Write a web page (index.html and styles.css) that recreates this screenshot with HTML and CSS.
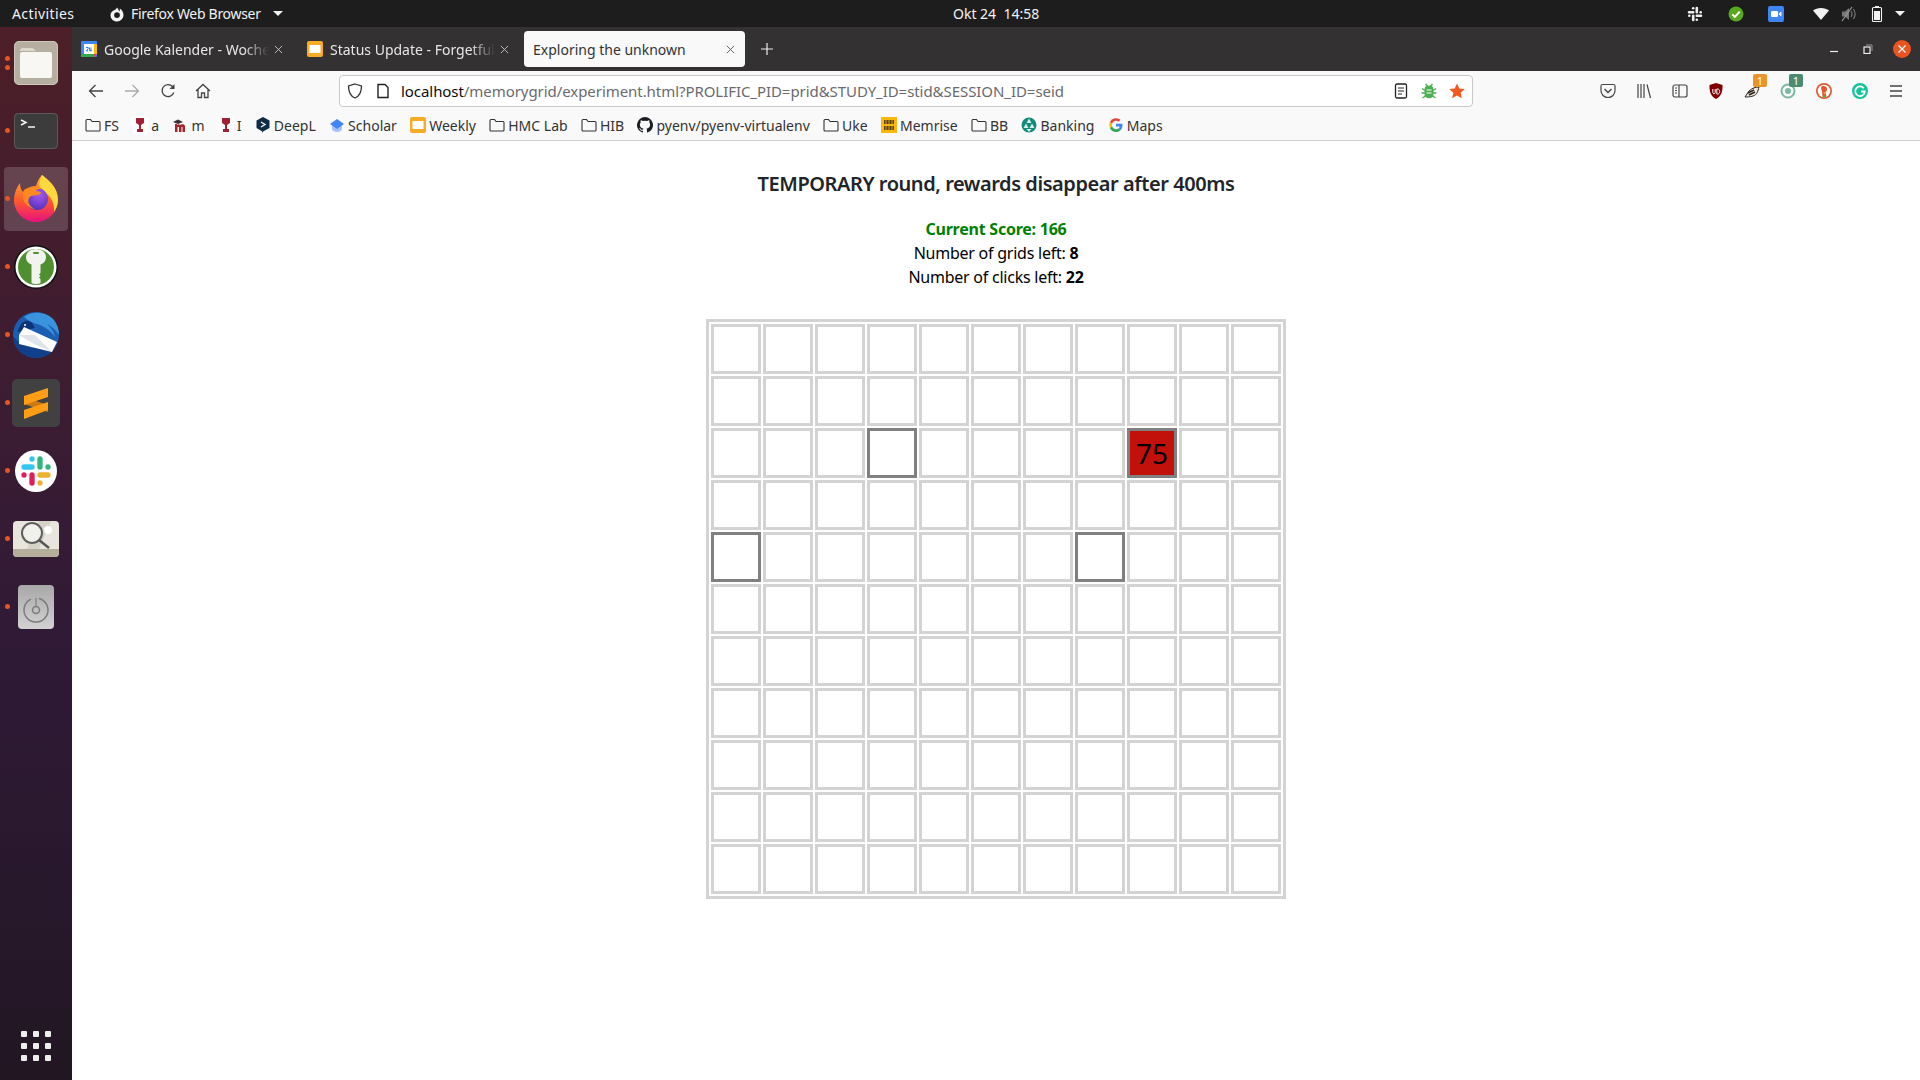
FILE: index.html
```html
<!DOCTYPE html>
<html lang="en">
<head>
    <meta charset="UTF-8">
    <meta name="viewport" content="width=device-width, initial-scale=1.0">
    <title>Exploring the unknown</title>
    <link rel="stylesheet" href="styles.css">
</head>
<body>
    <div class="topBar">
        <span class="activities">Activities</span>
        <div class="appMenu">
            <svg class="appIcon" viewBox="0 0 16 16"><path fill="#f2f2f2" d="M8 1.500c-.4 1.200-1.500 1.700-2.200 2.400C3.200 4.500 1.500 6.600 1.500 9.200 1.500 12.800 4.400 15.500 8 15.500s6.500-2.800 6.500-6.400c0-3-1.800-5.300-3.800-6.500.5 1.400.1 2.300-.5 2.800C9.600 3.800 9 2.500 8 1.500zM8 6.200a2.900 2.900 0 1 1 0 5.800 2.900 2.900 0 0 1 0-5.800z"/></svg>
            <span class="appName">Firefox Web Browser</span>
            <i class="caret"></i>
        </div>
        <span class="clock">Okt 24&nbsp; 14:58</span>
        <div class="tray">
            <svg class="slackTray" viewBox="0 0 16 16"><g fill="none" stroke="#eee" stroke-width="2.600" stroke-linecap="round"><path d="M2 6.300h4.200M9.800 2v4.200M14 9.800H9.800M6.200 14V9.800"/></g><g fill="#eee"><circle cx="6.200" cy="2.300" r="1.300"/><circle cx="13.700" cy="6.200" r="1.300"/><circle cx="9.800" cy="13.700" r="1.300"/><circle cx="2.300" cy="9.800" r="1.300"/></g></svg>
            <svg class="checkTray" viewBox="0 0 16 16"><circle cx="8" cy="8" r="7.500" fill="#5aa820"/><path d="M4.300 8.300l2.600 2.600 4.800-5.200" fill="none" stroke="#fff" stroke-width="1.900"/></svg>
            <svg class="zoomTray" viewBox="0 0 16 16"><rect width="16" height="18" y="-1" rx="4" fill="#3f86f4"/><rect x="3" y="5" width="7" height="6" rx="1.300" fill="#fff"/><path d="M10.800 7.500l2.600-2v5l-2.600-2z" fill="#fff"/></svg>
            <svg class="wifiTray" viewBox="0 0 16 16"><path fill="#f2f2f2" d="M8 14L0 4.500C2 3 4.800 2 8 2s6 1 8 2.500z"/></svg>
            <svg class="soundTray" viewBox="0 0 16 16"><path fill="#777" d="M1 5.500h3L8 2v12l-4-3.500H1z"/><path d="M10 5c1.200 1.800 1.200 4.200 0 6M12.300 3c2.200 3 2.200 7 0 10" fill="none" stroke="#777" stroke-width="1.200"/><path d="M1 15L11 1" stroke="#999" stroke-width="1.200"/></svg>
            <svg class="batteryTray" viewBox="0 0 16 16"><path d="M6 0h4v1.500H6z" fill="#f2f2f2"/><rect x="3.500" y="1.500" width="9" height="14" rx="1" fill="none" stroke="#f2f2f2" stroke-width="1.100"/><rect x="5" y="5" width="6" height="9" fill="#f2f2f2"/></svg>
            <i class="caret trayCaret"></i>
        </div>
    </div>

    <div class="desktop">
        <div class="dock">
            <div class="dockItem"><i class="dot dotUp"></i><i class="dot dotDown"></i>
                <svg class="dockIcon" viewBox="0 0 44 44"><rect width="44" height="44" rx="5" fill="#b6af9f"/><rect x=".5" y=".5" width="43" height="43" rx="5" fill="none" stroke="#cdc8bb"/><path d="M6 10c0-2 1-3 3-3h9c1.500 0 2.500 2 4 3z" fill="#dcd8cc"/><rect x="6" y="11" width="32" height="26" rx="2" fill="#f8f7f4"/></svg>
            </div>
            <div class="dockItem"><i class="dot"></i>
                <svg class="dockIcon termIcon" viewBox="0 0 44 36"><rect width="44" height="36" rx="4" fill="#3c3c3c"/><rect x=".5" y=".5" width="43" height="35" rx="4" fill="none" stroke="#5a5a5a"/><path d="M7 7l5 2.500L7 12M14 14h7" fill="none" stroke="#f4f4f4" stroke-width="1.500"/></svg>
            </div>
            <div class="dockItem active"><i class="dot"></i>
                <svg class="dockIcon foxIcon" viewBox="0 0 44 47">
                    <defs>
                        <linearGradient id="foxBody" x1="0" y1="0" x2="0" y2="1"><stop offset="0" stop-color="#ffb02e"/><stop offset=".55" stop-color="#ff5a2c"/><stop offset="1" stop-color="#e8107f"/></linearGradient>
                        <radialGradient id="foxGlobe" cx=".6" cy=".3" r=".8"><stop offset="0" stop-color="#a55cf0"/><stop offset="1" stop-color="#4a2bb5"/></radialGradient>
                    </defs>
                    <path d="M28 0c8 6 16 13 16 25 0 12-10 22-22 22S0 37 0 25C0 19 2 13 6 8c0 4 1 7 3 9 3-3 8-6 13-6 1-4 3-8 6-11z" fill="url(#foxBody)"/>
                    <path d="M28 0c6 5 16 12 16 25 0 5-2 9-4 12 1-11-5-18-12-21-3-2-4-8 0-16z" fill="#ffd83d"/>
                    <circle cx="23" cy="24" r="11" fill="url(#foxGlobe)"/>
                    <path d="M10 15c5-4 14-5 19-1-4-1-7 1-7 2 3 0 5 1 5 2-4 4-10 1-12 5-2 4 1 9 6 11-6-1-12-6-12-12 0-3 0-5 1-7z" fill="#ff8a1f"/>
                </svg>
            </div>
            <div class="dockItem"><i class="dot"></i>
                <svg class="dockIcon" viewBox="0 0 44 44"><circle cx="22" cy="22" r="22" fill="#111"/><circle cx="22" cy="22" r="20.500" fill="#fff"/><circle cx="22" cy="22" r="18" fill="#4e8f2f"/><path d="M22 4c6 0 10 3.500 10 8 0 4-2.500 6.500-5.500 7.500V28l-1.500 1.500 1.500 1.500-1.500 1.500 1.500 1.500V38c-2 1.500-7 1.500-9 0V19.500C14.500 18.500 12 16 12 12c0-4.500 4-8 10-8z" fill="#f2f2ee"/><rect x="19" y="7" width="6" height="2" rx="1" fill="#4e8f2f"/></svg>
            </div>
            <div class="dockItem"><i class="dot"></i>
                <svg class="dockIcon bigIcon" viewBox="0 0 48 48"><circle cx="24" cy="24" r="23" fill="#1a5fb4"/><path d="M12 6c8-6 22-6 30 3 3 4 5 9 5 15-4-6-8-9-12-11 3 3 7 7 8 13-5-7-11-11-18-13-4-1-8-3-13-7z" fill="#3b93dd"/><path d="M1 25C1 37 11 47 24 47c9 0 17-5 21-14-13 7-32 7-44-8z" fill="#123f8a"/><path d="M8 15c2-5 8-7 12-3l3 5-13 3-5 1z" fill="#0e3474"/><circle cx="13" cy="14" r="1" fill="#fff"/><path d="M7 24l5-8 33 15-5 10-33-8z" fill="#fff"/><path d="M7 24l16 0 17 17-18-8z" fill="#dfe3ea"/></svg>
            </div>
            <div class="dockItem"><i class="dot"></i>
                <svg class="dockIcon bigIcon" viewBox="0 0 48 48"><rect width="48" height="48" rx="5" fill="#414141"/><path d="M12 18l24 8v7L12 25z" fill="#c97a10"/><path d="M12 17L36 9v9L12 26z" fill="#ff9d14"/><path d="M36 23v8l-24 9v-9z" fill="#ff9d14"/></svg>
            </div>
            <div class="dockItem"><i class="dot"></i>
                <svg class="dockIcon slackIcon" viewBox="0 0 42 42"><circle cx="21" cy="21" r="21" fill="#fff"/><g fill="none" stroke-width="5.300" stroke-linecap="round"><path d="M9 17h8" stroke="#36c5f0"/><path d="M25 9v8" stroke="#2eb67d"/><path d="M33 25h-8" stroke="#ecb22e"/><path d="M17 33v-8" stroke="#e01e5a"/></g><circle cx="17" cy="9" r="2.650" fill="#36c5f0"/><circle cx="33" cy="17" r="2.650" fill="#2eb67d"/><circle cx="25" cy="33" r="2.650" fill="#ecb22e"/><circle cx="9" cy="25" r="2.650" fill="#e01e5a"/></svg>
            </div>
            <div class="dockItem"><i class="dot"></i>
                <svg class="dockIcon searchIcon" viewBox="0 0 46 36"><rect width="46" height="36" rx="4" fill="#e7e5dc"/><path d="M0 28h46v4c0 2-2 4-4 4H4c-2 0-4-2-4-4z" fill="#b5ae9b"/><path d="M26 0h12L26 28H14z" fill="#d5d3c7"/><circle cx="35" cy="9" r="4" fill="#fff"/><circle cx="19" cy="12" r="10" fill="#f0f0ec" stroke="#5f5f5f" stroke-width="2"/><path d="M26 19l10 8" stroke="#555" stroke-width="2.500"/></svg>
            </div>
            <div class="dockItem"><i class="dot"></i>
                <svg class="dockIcon diskIcon" viewBox="0 0 36 44">
                    <defs><linearGradient id="diskFill" x1="0" y1="0" x2="0" y2="1"><stop offset="0" stop-color="#a8a8a8"/><stop offset="1" stop-color="#d2d2d2"/></linearGradient></defs>
                    <rect width="36" height="44" rx="4" fill="url(#diskFill)"/><path d="M21 13.400a12 12 0 1 1-8 .7" fill="none" stroke="#7c7c7c" stroke-width="1.500"/><circle cx="18" cy="25" r="3.500" fill="none" stroke="#7c7c7c" stroke-width="1.500"/><path d="M18 13v8" stroke="#7c7c7c" stroke-width="1.200"/>
                </svg>
            </div>
            <div class="appGrid">
                <i></i><i></i><i></i><i></i><i></i><i></i><i></i><i></i><i></i>
            </div>
        </div>

        <div class="browser">
            <div class="tabBar">
                <div class="tab">
                    <svg class="favicon" viewBox="0 0 16 16"><rect width="16" height="16" rx="1" fill="#4285f4"/><rect x="3" y="3" width="10" height="10" fill="#fff"/><path d="M0 13h13v3H1a1 1 0 0 1-1-1z" fill="#34a853"/><path d="M13 13h3l-3 3z" fill="#ea4335"/><path d="M13 3h3v10h-3z" fill="#fbbc04"/><path d="M5 6.500h2.200v1L5.500 10H7M8.500 6.500V9.500h2M10 6.500V10.500" fill="none" stroke="#1a73e8" stroke-width=".9"/></svg>
                    <span class="tabTitle">Google Kalender - Woche</span>
                    <svg class="tabClose" viewBox="0 0 10 10"><path d="M1 1l8 8M9 1l-8 8" stroke="#c9c9c9" stroke-width="1"/></svg>
                </div>
                <div class="tab">
                    <svg class="favicon" viewBox="0 0 16 16"><rect width="16" height="16" rx="2" fill="#f9ab26"/><rect x="2.500" y="4" width="11" height="8" fill="#fff"/></svg>
                    <span class="tabTitle">Status Update - Forgetful</span>
                    <svg class="tabClose" viewBox="0 0 10 10"><path d="M1 1l8 8M9 1l-8 8" stroke="#c9c9c9" stroke-width="1"/></svg>
                </div>
                <div class="tab current">
                    <span class="tabTitle">Exploring the unknown</span>
                    <svg class="tabClose" viewBox="0 0 10 10"><path d="M1 1l8 8M9 1l-8 8" stroke="#555" stroke-width="1"/></svg>
                </div>
                <svg class="newTab" viewBox="0 0 12 12"><path d="M6 0v12M0 6h12" stroke="#eee" stroke-width="1.200"/></svg>
                <div class="winButtons">
                    <div class="winBtn"><svg viewBox="0 0 10 10"><path d="M1 7.500h8" stroke="#eee" stroke-width="1.200"/></svg></div>
                    <div class="winBtn"><svg viewBox="0 0 10 10"><rect x="1" y="3" width="6" height="6.500" fill="none" stroke="#eee" stroke-width="1.200"/><path d="M3 1h6v6" fill="none" stroke="#999"/></svg></div>
                    <div class="winBtn"><span class="closeCircle"><svg viewBox="0 0 10 10"><path d="M1.500 1.500l7 7M8.500 1.500l-7 7" stroke="#fff" stroke-width="1.200"/></svg></span></div>
                </div>
            </div>

            <div class="toolBar">
                <div class="toolBtn"><svg viewBox="0 0 16 16"><path d="M15 8H1.500M7.500 2L1.500 8l6 6" fill="none" stroke="#444" stroke-width="1.300"/></svg></div>
                <div class="toolBtn"><svg viewBox="0 0 16 16"><path d="M1 8h13.500M8.500 2l6 6-6 6" fill="none" stroke="#aaa" stroke-width="1.300"/></svg></div>
                <div class="toolBtn"><svg viewBox="0 0 16 16"><path d="M13.800 9.500A6 6 0 1 1 12.500 3.500l1.500 1.500" fill="none" stroke="#444" stroke-width="1.300"/><path d="M14.500 1v5h-5z" fill="#444"/></svg></div>
                <div class="toolBtn homeBtn"><svg viewBox="0 0 16 16"><path d="M1 8l7-6.500L15 8M3 6.500V14.500h3.500V10h3v4.500H13V6.500" fill="none" stroke="#444" stroke-width="1.300"/></svg></div>

                <div class="urlBar">
                    <svg class="urlIcon" viewBox="0 0 16 16"><path d="M8 1l6.500 2c0 6-1.500 10-6.500 12C3 13 1.500 9 1.500 3z" fill="none" stroke="#333" stroke-width="1.300"/></svg>
                    <svg class="urlIcon pageIcon" viewBox="0 0 16 16"><path d="M3 1.500h7l3 3v10H3z" fill="none" stroke="#222" stroke-width="1.400"/></svg>
                    <span class="urlText"><b>localhost</b>/memorygrid/experiment.html?PROLIFIC_PID=prid&amp;STUDY_ID=stid&amp;SESSION_ID=seid</span>
                    <svg class="urlIcon" viewBox="0 0 16 16"><rect x="2.500" y="1" width="11" height="14" rx="1.500" fill="none" stroke="#222" stroke-width="1.300"/><path d="M5 5h6M5 8h6M5 11h4" stroke="#222" stroke-width="1.200"/></svg>
                    <svg class="urlIcon" viewBox="0 0 16 16"><path d="M8 2.500c3 0 4.500 1.500 4.500 4v5.500c0 1.800-2.200 3.200-4.500 3.200S3.500 13.800 3.500 12V6.500c0-2.500 1.500-4 4.500-4z" fill="#4caf50"/><path d="M4.500 1l2 2M11.500 1l-2 2M1 5.500l3 2M15 5.500l-3 2M.5 10H4M15.500 10H12M1.500 15l3-2M14.500 15l-3-2" stroke="#4caf50" stroke-width="1.500"/><path d="M5.500 7h5M5.500 10h5" stroke="#fff" stroke-width="1"/></svg>
                    <svg class="urlIcon" viewBox="0 0 16 16"><path fill="#f2581f" d="M8 .5l2.300 5 5.400.6-4 3.700 1.100 5.400L8 12.500l-4.800 2.700 1.100-5.400-4-3.700 5.400-.6z"/></svg>
                </div>

                <div class="toolIcons">
                    <div class="toolBtn"><svg viewBox="0 0 16 16"><path d="M1 3c0-1 .7-1.500 1.500-1.500h11C14.300 1.500 15 2 15 3v4.500C15 11.500 12 14.500 8 14.500S1 11.500 1 7.500z" fill="none" stroke="#444" stroke-width="1.200"/><path d="M4.500 6L8 9.500 11.500 6" fill="none" stroke="#444" stroke-width="1.400"/></svg></div>
                    <div class="toolBtn"><svg viewBox="0 0 16 16"><path d="M2 1v14M5 1v14M8 1v14M11 1.500l3.500 13.500" fill="none" stroke="#444" stroke-width="1.200"/></svg></div>
                    <div class="toolBtn"><svg viewBox="0 0 16 16"><rect x="1" y="2" width="14" height="12" rx="2" fill="none" stroke="#444" stroke-width="1.200"/><path d="M7 2v12M3 5h2M3 7.500h2M3 10h2" stroke="#444" stroke-width="1.200"/></svg></div>
                    <div class="toolBtn"><svg viewBox="0 0 16 16"><path d="M8 0l6.500 2c.3 7-1.500 11.500-6.500 14C3 13.500 1.200 9 1.500 2z" fill="#800000"/><path d="M4.800 6v3.500c0 1.500 2.400 1.500 2.400 0V6M8.800 6v5h1c2.500 0 2.500-5 0-5z" fill="none" stroke="#fff" stroke-width="1"/></svg></div>
                    <div class="toolBtn badged">
                        <svg viewBox="0 0 16 16"><path d="M1 14l4-6c3-3 7-4 10-4-1 4-2 8-6 9-3 1-6 1-8 1z" fill="#f4ead8" stroke="#222" stroke-width="1"/><path d="M4 10l6-3M5 12l6-3" stroke="#222" stroke-width="1.500"/></svg>
                        <span class="badge orange">1</span>
                    </div>
                    <div class="toolBtn badged">
                        <svg viewBox="0 0 16 16"><circle cx="8" cy="8" r="6.500" fill="none" stroke="#79b9a3" stroke-width="2"/><circle cx="8" cy="8" r="3" fill="#79b9a3"/></svg>
                        <span class="badge teal">1</span>
                    </div>
                    <div class="toolBtn"><svg viewBox="0 0 16 16"><circle cx="8" cy="8" r="8" fill="#de5833"/><circle cx="8" cy="8" r="6.300" fill="#fff"/><path d="M5.500 3.500c2-1 5-.5 5.500 2 .3 2-1 3-1.500 4l1 4c-1 .8-3 .8-4 0L6 8C5 6.500 4.800 4.500 5.500 3.500z" fill="#de5833"/><path d="M7 9.500h3l-1 1.500z" fill="#fdd20a"/><path d="M6.500 12.500l2.500.5v1.500l-2.500-.5z" fill="#4cba3c"/></svg></div>
                    <div class="toolBtn"><svg viewBox="0 0 16 16"><circle cx="8" cy="8" r="8" fill="#15c39a"/><path d="M11.800 5.300A4.800 4.800 0 1 0 12.800 8.500H9" fill="none" stroke="#fff" stroke-width="1.800"/></svg></div>
                    <div class="toolBtn"><svg viewBox="0 0 16 16"><path d="M2 3h12M2 8h12M2 13h12" stroke="#444" stroke-width="1.300"/></svg></div>
                </div>
            </div>

            <div class="bookmarks">
                <div class="mark"><svg viewBox="0 0 16 16"><path d="M1 3.500c0-.6.400-1 1-1h3.500l1.500 2h7c.6 0 1 .4 1 1V13c0 .6-.4 1-1 1H2c-.6 0-1-.4-1-1z" fill="none" stroke="#333" stroke-width="1.100"/></svg>FS</div>
                <div class="mark"><svg viewBox="0 0 16 16"><rect width="16" height="16" fill="#fff"/><path d="M4 1h8v5l-3 2v4h2v3H5v-3h2V8L4 6z" fill="#a31f34"/></svg>a</div>
                <div class="mark"><svg viewBox="0 0 16 16"><path d="M1 5l5-2.500L11 5 6 7z" fill="#333"/><path d="M3 15V7h2v1c1-1 2.500-1 3 0 1-1 5-1.500 5 1.500V15h-2.500V10h-1v5H7V10H5.500v5z" fill="#a7242b"/></svg>m</div>
                <div class="mark"><svg viewBox="0 0 16 16"><rect width="16" height="16" fill="#fff"/><path d="M4 1h8v5l-3 2v4h2v3H5v-3h2V8L4 6z" fill="#a31f34"/></svg>I</div>
                <div class="mark"><svg viewBox="0 0 16 16"><path d="M8 0l6.500 3.500v7.500L8 14.500 7 16v-1.800L1.500 11V3.500z" fill="#0f2b46"/><path d="M6 5l4 2.500-4 2.500" fill="none" stroke="#fff" stroke-width="1.300"/></svg>DeepL</div>
                <div class="mark"><svg viewBox="0 0 16 16"><path d="M8 9l5 0v3a5 3 0 0 1-10 0V9z" fill="#a0c3ff"/><path d="M8 2l7 5-7 5-7-5z" fill="#4285f4"/></svg>Scholar</div>
                <div class="mark"><svg viewBox="0 0 16 16"><rect width="16" height="16" rx="2" fill="#f9ab26"/><rect x="2.500" y="4" width="11" height="8" fill="#fff"/></svg>Weekly</div>
                <div class="mark"><svg viewBox="0 0 16 16"><path d="M1 3.500c0-.6.400-1 1-1h3.500l1.500 2h7c.6 0 1 .4 1 1V13c0 .6-.4 1-1 1H2c-.6 0-1-.4-1-1z" fill="none" stroke="#333" stroke-width="1.100"/></svg>HMC Lab</div>
                <div class="mark"><svg viewBox="0 0 16 16"><path d="M1 3.500c0-.6.400-1 1-1h3.500l1.500 2h7c.6 0 1 .4 1 1V13c0 .6-.4 1-1 1H2c-.6 0-1-.4-1-1z" fill="none" stroke="#333" stroke-width="1.100"/></svg>HIB</div>
                <div class="mark"><svg viewBox="0 0 16 16"><path fill="#1b1f23" d="M8 0a8 8 0 0 0-2.500 15.600c.4.100.5-.2.500-.4v-1.400c-2.200.5-2.700-1-2.700-1-.4-.9-.9-1.200-.9-1.200-.7-.5.100-.5.100-.5.800.100 1.200.8 1.200.8.700 1.200 1.900.9 2.300.7.100-.5.300-.9.500-1.100-1.800-.2-3.600-.9-3.600-4 0-.9.300-1.600.8-2.100-.1-.2-.4-1 .1-2.100 0 0 .7-.2 2.200.8a7.600 7.600 0 0 1 4 0c1.500-1 2.200-.8 2.200-.8.500 1.100.2 1.900.1 2.100.5.500.8 1.200.8 2.100 0 3.100-1.900 3.800-3.700 4 .3.300.6.800.6 1.500v2.200c0 .2.100.5.500.4A8 8 0 0 0 8 0z"/></svg>pyenv/pyenv-virtualenv</div>
                <div class="mark"><svg viewBox="0 0 16 16"><path d="M1 3.500c0-.6.400-1 1-1h3.500l1.500 2h7c.6 0 1 .4 1 1V13c0 .6-.4 1-1 1H2c-.6 0-1-.4-1-1z" fill="none" stroke="#333" stroke-width="1.100"/></svg>Uke</div>
                <div class="mark"><svg viewBox="0 0 16 16"><rect width="16" height="16" fill="#fbb80c"/><path d="M3 3h10v4H3zM3 9h10v4H3z" fill="#5a4310"/><path d="M5 3v4M8 3v4M11 3v4M5 9v4M8 9v4M11 9v4" stroke="#fbb80c" stroke-width=".8"/></svg>Memrise</div>
                <div class="mark"><svg viewBox="0 0 16 16"><path d="M1 3.500c0-.6.400-1 1-1h3.500l1.500 2h7c.6 0 1 .4 1 1V13c0 .6-.4 1-1 1H2c-.6 0-1-.4-1-1z" fill="none" stroke="#333" stroke-width="1.100"/></svg>BB</div>
                <div class="mark"><svg viewBox="0 0 16 16"><circle cx="8" cy="8" r="7.500" fill="#158a78"/><path d="M8 1.500l2.500 4.500h-5zM2.500 11L5 6.500 7.500 11zM13.500 11L11 6.500 8.500 11zM5.500 12h5L8 15z" fill="#d5efe9"/></svg>Banking</div>
                <div class="mark"><svg viewBox="0 0 16 16"><path d="M14.500 8.200c0-.5 0-1-.1-1.400H8v2.700h3.700c-.2.900-.6 1.600-1.300 2l2.100 1.700c1.200-1.100 2-2.800 2-5z" fill="#4285f4"/><path d="M8 15c1.900 0 3.400-.6 4.500-1.800l-2.100-1.700c-.6.400-1.400.7-2.400.7-1.800 0-3.300-1.200-3.900-2.900L1.900 11C3 13.400 5.300 15 8 15z" fill="#34a853"/><path d="M4.100 9.300A4.300 4.300 0 0 1 4.100 6.700L1.900 5A7 7 0 0 0 1.900 11z" fill="#fbbc05"/><path d="M8 3.800c1 0 1.900.4 2.600 1l2-2A7 7 0 0 0 1.900 5l2.200 1.700C4.700 5 6.200 3.800 8 3.800z" fill="#ea4335"/></svg>Maps</div>
            </div>

            <div class="page">
                <h1 class="roundTitle">TEMPORARY round, rewards disappear after 400ms</h1>
                <div class="stats">
                    <p class="score">Current Score: 166</p>
                    <p>Number of grids left: <b>8</b></p>
                    <p>Number of clicks left: <b>22</b></p>
                </div>
                <div class="grid">
                    <div></div><div></div><div></div><div></div><div></div><div></div><div></div><div></div><div></div><div></div><div></div>
                    <div></div><div></div><div></div><div></div><div></div><div></div><div></div><div></div><div></div><div></div><div></div>
                    <div></div><div></div><div></div><div class="seen"></div><div></div><div></div><div></div><div></div><div class="seen reward">75</div><div></div><div></div>
                    <div></div><div></div><div></div><div></div><div></div><div></div><div></div><div></div><div></div><div></div><div></div>
                    <div class="seen"></div><div></div><div></div><div></div><div></div><div></div><div></div><div class="seen"></div><div></div><div></div><div></div>
                    <div></div><div></div><div></div><div></div><div></div><div></div><div></div><div></div><div></div><div></div><div></div>
                    <div></div><div></div><div></div><div></div><div></div><div></div><div></div><div></div><div></div><div></div><div></div>
                    <div></div><div></div><div></div><div></div><div></div><div></div><div></div><div></div><div></div><div></div><div></div>
                    <div></div><div></div><div></div><div></div><div></div><div></div><div></div><div></div><div></div><div></div><div></div>
                    <div></div><div></div><div></div><div></div><div></div><div></div><div></div><div></div><div></div><div></div><div></div>
                    <div></div><div></div><div></div><div></div><div></div><div></div><div></div><div></div><div></div><div></div><div></div>
                </div>
            </div>
        </div>
    </div>
</body>
</html>
```

FILE: styles.css
```css
*{
    padding: 0px;
    margin: 0px;
    box-sizing: border-box;
}
html, body{
    height: 100%;
    overflow: hidden;
}
body{
    display: flex;
    flex-direction: column;
    font-family: "Noto Sans", "Open Sans", sans-serif;
    background: #fff;
}

/* gnome top bar */
.topBar{
    display: flex;
    align-items: center;
    flex: none;
    height: 27px;
    padding: 0px 15px 0px 12px;
    background: #1d1d1d;
    color: #f2f2f2;
    font-size: 14px;
}
.activities{
    width: 97px;
    letter-spacing: 0.4px;
}
.appMenu{
    display: flex;
    align-items: center;
    width: 174px;
}
.appIcon{
    flex: none;
    width: 16px;
    height: 16px;
    margin-right: 6px;
}
.appName{
    white-space: nowrap;
    letter-spacing: -0.3px;
}
.caret{
    display: block;
    flex: none;
    width: 0px;
    height: 0px;
    margin-left: auto;
    border-left: 5px solid transparent;
    border-right: 5px solid transparent;
    border-top: 5px solid #f2f2f2;
}
.clock{
    margin-left: 670px;
}
.tray{
    display: flex;
    align-items: center;
    margin-left: auto;
}
.tray svg{
    width: 16px;
    height: 16px;
    overflow: hidden;
}
.checkTray{
    margin-left: 25px;
}
.zoomTray{
    margin-left: 24px;
}
.wifiTray{
    margin-left: 29px;
}
.soundTray, .batteryTray{
    margin-left: 12px;
}
.trayCaret{
    margin-left: 10px;
}

/* ubuntu dock */
.desktop{
    display: flex;
    flex: 1;
    min-height: 0px;
}
.dock{
    position: relative;
    display: flex;
    flex-direction: column;
    flex: none;
    width: 72px;
    padding-top: 2px;
    background: linear-gradient(180deg, #4d1f28 0%, #3c1c32 35%, #2f1a36 60%, #221623 100%);
}
.dockItem{
    position: relative;
    display: flex;
    align-items: center;
    justify-content: center;
    height: 68px;
    margin: 0px 4px;
    border-radius: 4px;
}
.dockItem.active{
    background: rgba(255, 255, 255, 0.17);
    height: 64px;
    margin: 2px 4px;
}
.dockIcon{
    display: block;
    flex: none;
    width: 44px;
    height: 44px;
}
.termIcon{
    height: 36px;
}
.foxIcon{
    height: 47px;
    margin-bottom: 2px;
}
.bigIcon{
    width: 48px;
    height: 48px;
}
.slackIcon{
    width: 42px;
    height: 42px;
}
.searchIcon{
    width: 46px;
    height: 36px;
}
.diskIcon{
    width: 36px;
}
.dot{
    position: absolute;
    left: 1px;
    top: 31px;
    width: 5px;
    height: 5px;
    border-radius: 50%;
    background: #e95420;
}
.dockItem.active .dot{
    top: 29px;
}
.dot.dotUp{
    top: 27px;
}
.dot.dotDown{
    top: 36px;
}
.appGrid{
    display: grid;
    grid-template-columns: repeat(3, 6px);
    gap: 6px;
    margin-top: auto;
    margin-bottom: 19px;
    justify-content: center;
}
.appGrid i{
    width: 6px;
    height: 6px;
    background: #eeeeec;
    border-radius: 1px;
}

/* firefox */
.browser{
    display: flex;
    flex-direction: column;
    flex: 1;
    min-width: 0px;
}
.tabBar{
    display: flex;
    align-items: center;
    flex: none;
    height: 44px;
    background: #333132;
}
.tab{
    display: flex;
    align-items: center;
    flex: none;
    width: 221px;
    height: 36px;
    margin-right: 5px;
    padding: 0px 9px;
    color: #e6e6e6;
    font-size: 14px;
    border-radius: 4px;
}
.tab.current{
    background: #f9f9fa;
    color: #333;
}
.favicon{
    flex: none;
    width: 16px;
    height: 16px;
    margin-right: 7px;
}
.tabTitle{
    flex: 1;
    min-width: 0px;
    overflow: hidden;
    white-space: nowrap;
    -webkit-mask-image: linear-gradient(90deg, #000 85%, transparent 100%);
    mask-image: linear-gradient(90deg, #000 85%, transparent 100%);
}
.tab.current .tabTitle{
    -webkit-mask-image: none;
    mask-image: none;
}
.tabClose{
    flex: none;
    width: 9px;
    height: 9px;
    margin-left: 5px;
    margin-right: 1px;
}
.newTab{
    width: 12px;
    height: 12px;
    margin-left: 11px;
}
.winButtons{
    display: flex;
    margin-left: auto;
    padding-right: 1px;
}
.winBtn{
    display: flex;
    align-items: center;
    justify-content: center;
    width: 34px;
}
.winBtn svg{
    width: 10px;
    height: 10px;
}
.closeCircle{
    display: flex;
    align-items: center;
    justify-content: center;
    width: 18px;
    height: 18px;
    background: #e95420;
    border-radius: 50%;
}
.toolBar{
    display: flex;
    align-items: center;
    flex: none;
    height: 40px;
    padding: 0px 6px;
    background: #f9f9fa;
}
.toolBtn{
    position: relative;
    display: flex;
    align-items: center;
    justify-content: center;
    flex: none;
    width: 36px;
    height: 32px;
}
.toolBtn svg{
    width: 16px;
    height: 16px;
}
.homeBtn{
    padding-right: 2px;
}
.urlBar{
    display: flex;
    align-items: center;
    width: 1134px;
    height: 32px;
    margin-left: 117px;
    padding: 0px 7px 0px 7px;
    background: #fff;
    border: 1px solid #c8c8c8;
    border-radius: 4px;
}
.urlIcon{
    flex: none;
    width: 16px;
    height: 16px;
    margin-left: 12px;
}
.urlIcon:first-child{
    margin-left: 0px;
}
.urlText{
    flex: 1;
    min-width: 0px;
    margin-left: 10px;
    color: #6a6a6f;
    font-size: 15px;
    letter-spacing: -0.06px;
    white-space: nowrap;
    overflow: hidden;
}
.urlText b{
    color: #0c0c0d;
    font-weight: 400;
}
.toolIcons{
    display: flex;
    margin-left: auto;
}
.badge{
    position: absolute;
    top: -1px;
    left: 19px;
    width: 14px;
    height: 13px;
    color: #fff;
    font-size: 11px;
    line-height: 13px;
    text-align: center;
    border-radius: 2px;
}
.orange{
    background: #ec9329;
}
.teal{
    background: #4d8a74;
}
.bookmarks{
    display: flex;
    align-items: center;
    gap: 13.3px;
    flex: none;
    height: 30px;
    padding: 0px 0px 1px 13px;
    background: #f9f9fa;
    border-bottom: 1px solid #cfcfd1;
    color: #333;
    font-size: 14px;
}
.mark{
    display: flex;
    align-items: center;
    gap: 3px;
    white-space: nowrap;
}
.mark svg{
    flex: none;
    width: 16px;
    height: 16px;
}

/* experiment page */
.page{
    flex: 1;
    padding-top: 31px;
    background: #fff;
    color: #000;
    text-align: center;
}
.roundTitle{
    height: 24px;
    color: #212529;
    font-size: 20px;
    font-weight: 600;
    letter-spacing: -0.44px;
    line-height: 24px;
}
.stats{
    margin-top: 21px;
    font-size: 16px;
    letter-spacing: -0.24px;
    line-height: 24px;
}
.score{
    color: #008000;
    font-weight: 700;
}
.grid{
    display: grid;
    grid-template-columns: repeat(11, 50px);
    grid-auto-rows: 50px;
    gap: 2px;
    width: 580px;
    margin: 30px auto 0px;
    padding: 2px;
    border: 3px solid #d3d3d3;
}
.grid div{
    border: 3px solid #d3d3d3;
}
.grid .seen{
    border-color: #808080;
}
.grid .reward{
    background: #c2100a;
    font-size: 28px;
    letter-spacing: 0px;
    line-height: 44px;
}
```
